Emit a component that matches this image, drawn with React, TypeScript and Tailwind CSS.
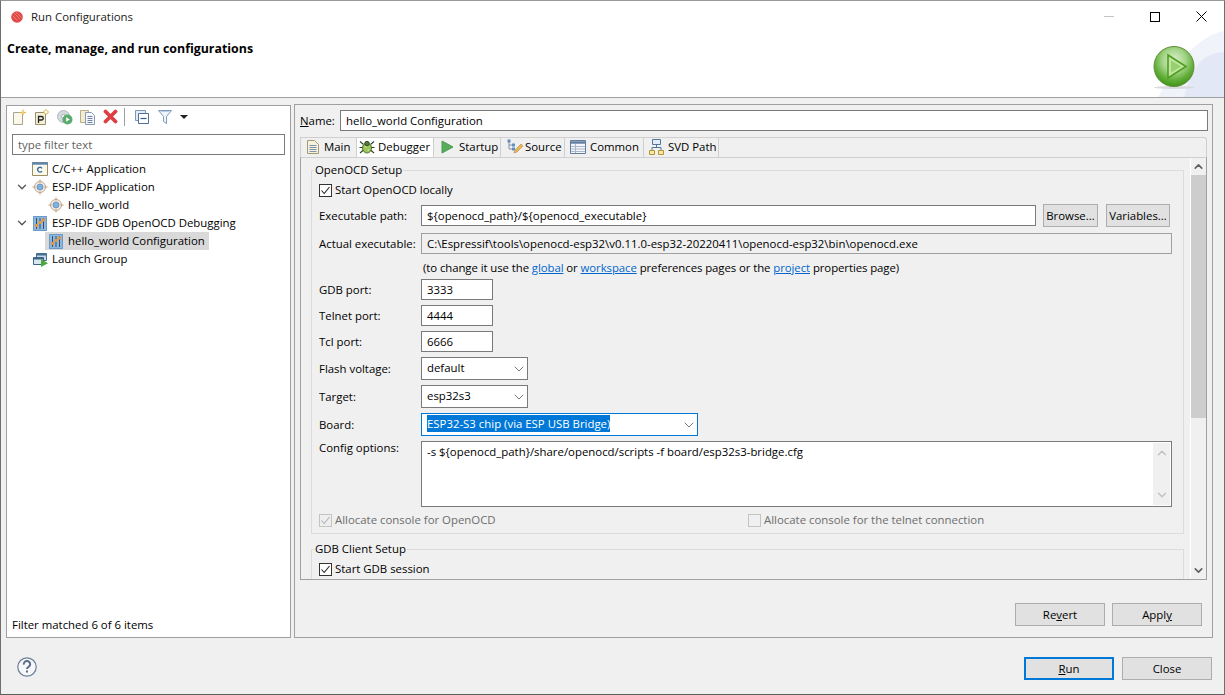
import React from 'react';
import { ChevronDown, ChevronUp } from 'lucide-react';

const AppIcon = () => (
  <svg width="12" height="12" viewBox="0 0 12 12">
    <circle cx="6" cy="6" r="5.8" fill="#df4a48" />
    <path d="M3 2l6 6M1.500 4.500l5 5M5 1l5.500 5.500" stroke="#f08a84" strokeWidth="0.8" />
  </svg>
);

const PlayBadge = () => (
  <svg width="42" height="44" viewBox="0 0 42 44">
    <defs>
      <radialGradient id="ball" cx="50%" cy="35%" r="65%">
        <stop offset="0%" stopColor="#dcefcf" />
        <stop offset="45%" stopColor="#a4d488" />
        <stop offset="75%" stopColor="#63ae3a" />
        <stop offset="100%" stopColor="#3f9416" />
      </radialGradient>
    </defs>
    <ellipse cx="21" cy="41.500" rx="20" ry="1.500" fill="#d9dadb" />
    <circle cx="21" cy="20.500" r="20" fill="url(#ball)" stroke="#5f8f3a" strokeWidth="1" />
    <path d="M15 9l18 11.500-18 11.500z" fill="#bfe5a0" stroke="#4f9e1e" strokeWidth="1.600" />
    <path d="M18 14.500l10 6-10 6z" fill="#98cf70" />
  </svg>
);

const NewConfig = () => (
  <svg width="16" height="16" viewBox="0 0 16 16">
    <path d="M2.500 3.500h9v12h-9z" fill="#fbf8ea" stroke="#a8a68c" />
    <path d="M12 .5v6M9 3.500h6" stroke="#e5b84a" strokeWidth="1.200" />
    <path d="M10.500 2l3 3M13.500 2l-3 3" stroke="#f0d890" strokeWidth="0.800" />
  </svg>
);

const NewProto = () => (
  <svg width="16" height="16" viewBox="0 0 16 16">
    <path d="M1.500 3.500h10v12h-10z" fill="#f4f0d8" stroke="#96906c" />
    <path d="M4.500 14V7.500h3a1.700 1.700 0 010 3.500h-3" fill="none" stroke="#222222" strokeWidth="1.300" />
    <path d="M12 .5l2.500 2.500L12 5.500 9.500 3z" fill="#ffffff" stroke="#d9a92c" />
  </svg>
);

const Duplicate = () => (
  <svg width="16" height="16" viewBox="0 0 16 16">
    <circle cx="6.500" cy="7.500" r="6" fill="#d5d8de" stroke="#b4b8c2" />
    <circle cx="6.500" cy="7.500" r="2" fill="#ffffff" stroke="#a8acb6" />
    <circle cx="10.500" cy="10.500" r="5" fill="#5bab6c" />
    <path d="M9.200 8.200l3.600 2.300-3.600 2.300z" fill="#ffffff" />
  </svg>
);

const Copy = () => (
  <svg width="16" height="16" viewBox="0 0 16 16">
    <path d="M.5 1.500h8v12h-8z" fill="#f4ecd2" stroke="#bcae84" />
    <path d="M5.500 3.500h6l3 3v9h-9z" fill="#f7f8fb" stroke="#8d9cb4" />
    <path d="M7.500 7.500h5M7.500 9.500h5M7.500 11.500h5M7.500 13.500h5" stroke="#6e84a8" />
  </svg>
);

const DeleteX = () => (
  <svg width="15" height="15" viewBox="0 0 15 15">
    <path d="M2.500 2.500l10 10M12.500 2.500l-10 10" stroke="#dd3f44" strokeWidth="3.800" strokeLinecap="round" />
  </svg>
);

const Collapse = () => (
  <svg width="14" height="14" viewBox="0 0 14 14">
    <path d="M.5.5h10v10H.5z" fill="#e4ebf4" stroke="#7d97b8" />
    <path d="M3.500 3.500h10v10h-10z" fill="#ffffff" stroke="#4f7199" />
    <path d="M5.500 8.500h6" stroke="#2f5b8e" strokeWidth="1.200" />
  </svg>
);

const Funnel = () => (
  <svg width="14" height="16" viewBox="0 0 14 16">
    <path d="M.5 1.500h13l-5 6v7l-3-2v-5z" fill="#eef4fa" stroke="#7f9cbc" />
    <path d="M2.500 2.500h9" stroke="#b8cde0" />
  </svg>
);

const CIcon = () => (
  <svg width="16" height="16" viewBox="0 0 16 16">
    <path d="M.5 1.500h15v13H.5z" fill="#fbf8ec" stroke="#9a8f5d" />
    <path d="M0 2.500h16" stroke="#5d87b0" strokeWidth="2.400" />
    <path d="M10 7.400A2.300 2.300 0 106 9.800a2.300 2.300 0 004 .4" fill="none" stroke="#3f6e9c" strokeWidth="1.300" />
  </svg>
);

const TargetIcon = () => (
  <svg width="16" height="16" viewBox="0 0 16 16">
    <circle cx="8" cy="8" r="5.500" fill="#f4ece2" stroke="#c2a88a" />
    <circle cx="8" cy="8" r="3" fill="#7fb2e0" stroke="#689ac6" />
    <path d="M8 .5v3M8 12.500v3M.5 8h3M12.500 8h3" stroke="#c09a72" />
  </svg>
);

const DebugCfg = () => (
  <svg width="14" height="15" viewBox="0 0 14 15">
    <path d="M0 0h14v15H0z" fill="#8ab8e2" />
    <path d="M.5.5h13v14H.5z" fill="none" stroke="#6c9ac6" />
    <path d="M3.500 2v11M7 2v11M10.500 2v11" stroke="#3e4e60" />
    <rect x="2" y="8" width="3" height="3" fill="#e6963c" />
    <rect x="5.500" y="5" width="3" height="3" fill="#e6963c" />
    <rect x="9" y="2.500" width="3" height="3" fill="#e6963c" />
  </svg>
);

const LaunchGroup = () => (
  <svg width="15" height="15" viewBox="0 0 15 15">
    <path d="M3.500 1.500h10v7h-10z" fill="#c8d8e6" stroke="#47708f" />
    <path d="M3.500 1.500h10v2h-10z" fill="#47708f" />
    <path d="M.5 5.500h10v7H.5z" fill="#dbe6f0" stroke="#3d6684" />
    <path d="M.5 5.500h10v2H.5z" fill="#3d6684" />
    <path d="M8 7l7 4.200-7 3.800z" fill="#4aa83e" />
  </svg>
);

const DocTab = () => (
  <svg width="14" height="16" viewBox="0 0 14 16">
    <path d="M1.500 1.500h7l4 4v9h-11z" fill="#f6f1dc" stroke="#a49a70" />
    <path d="M3.500 6.500h7M3.500 8.500h7M3.500 10.500h7M3.500 12.500h7" stroke="#7e92ae" />
  </svg>
);

const BugTab = () => (
  <svg width="16" height="16" viewBox="0 0 16 16">
    <path d="M1 2.500l3.500 3M15 2.500l-3.500 3M.5 8.500h4M15.500 8.500h-4M1 14l3.500-3M15 14l-3.500-3" stroke="#26402c" strokeWidth="1.100" />
    <ellipse cx="8" cy="9" rx="4.500" ry="5" fill="#9cc45a" stroke="#4d7432" />
    <circle cx="8" cy="4.500" r="2.200" fill="#5c7a3c" stroke="#2e4a24" />
    <path d="M6 8h1.500M8.500 11h1.500" stroke="#e4f0c4" />
  </svg>
);

const PlayTab = () => (
  <svg width="13" height="14" viewBox="0 0 13 14">
    <path d="M1 1l11 6-11 6z" fill="#58ad5c" stroke="#4a9a50" />
  </svg>
);

const SourceTab = () => (
  <svg width="17" height="16" viewBox="0 0 17 16">
    <path d="M3 2v8h4M3 6h4" fill="none" stroke="#7e92ae" />
    <rect x="1.500" y=".5" width="3" height="3" fill="#5f8fc0" />
    <rect x="6" y="4.500" width="3" height="3" fill="#5f8fc0" />
    <rect x="6" y="8.500" width="3" height="3" fill="#5f8fc0" />
    <path d="M8 14l1-3 6-6 2 2-6 6z" fill="#e8b65a" stroke="#c08a34" strokeWidth=".6" />
  </svg>
);

const CommonTab = () => (
  <svg width="16" height="14" viewBox="0 0 16 14">
    <path d="M.5.5h15v13H.5z" fill="#f4f6f9" stroke="#5f7d9e" />
    <path d="M1 2.500h14" stroke="#5f7d9e" strokeWidth="2.400" />
    <path d="M5.500 4v9M1 6.500h14M1 9h14M1 11.500h14" stroke="#a8b8ca" />
  </svg>
);

const SvdTab = () => (
  <svg width="15" height="16" viewBox="0 0 15 16">
    <path d="M3.500.5h8v5h-8z" fill="#e4ecf6" stroke="#50769c" />
    <path d="M7.500 5.500v3M3 11V8.500h9V11" fill="none" stroke="#50769c" />
    <path d="M.5 11.500h5v4h-5zM9.500 11.500h5v4h-5z" fill="#f8e8a8" stroke="#b89430" />
  </svg>
);

const Help = () => (
  <svg width="20" height="20" viewBox="0 0 20 20">
    <circle cx="10" cy="10" r="9.200" fill="#f6f7f9" stroke="#6c7f98" strokeWidth="1.200" />
    <path d="M6.800 7.600a3.200 3.200 0 116 1c-.6 1.200-2.800 1.600-2.800 3.400" fill="none" stroke="#5a6d88" strokeWidth="2" />
    <rect x="9" y="13.500" width="2" height="2" fill="#5a6d88" />
  </svg>
);

const Check = ({ muted = false }: { muted?: boolean }) => (
  <span className={`flex h-[13px] w-[13px] shrink-0 items-center justify-center border ${muted ? 'border-[#c4c4c4] bg-[#eeeeee]' : 'border-[#333333] bg-white'}`}>
    <svg width="11" height="11" viewBox="0 0 11 11">
      <path d="M1.500 5.500l2.700 3 5.300-6.500" fill="none" stroke={muted ? '#b0b0b0' : '#222222'} strokeWidth="1.100" />
    </svg>
  </span>
);

const Btn = ({ children, className = '', focused = false }: { children: React.ReactNode; className?: string; focused?: boolean }) => (
  <div className={`flex h-[23px] items-center justify-center bg-[#e1e1e1] text-black ${focused ? 'border-2 border-[#0078d7]' : 'border border-[#adadad]'} ${className}`}>{children}</div>
);

const Field = ({ children, className = '', disabled = false }: { children?: React.ReactNode; className?: string; disabled?: boolean }) => (
  <div className={`flex h-[21px] items-center border pl-[5px] ${disabled ? 'border-[#a0a0a0] bg-[#f0f0f0]' : 'border-[#7a7a7a] bg-white'} ${className}`}>{children}</div>
);

const Select = ({ text }: { text: string }) => (
  <div className="flex h-[23px] w-[107px] items-center justify-between border border-[#7a7a7a] bg-white pl-[5px]">
    <span className="-mt-[2px]">{text}</span>
    <ChevronDown size={16} strokeWidth={1.100} color="#444444" />
  </div>
);

const Row = ({ label, children, className = '' }: { label: string; children: React.ReactNode; className?: string }) => (
  <div className={`flex items-center ${className}`}>
    <span className="w-[102px] shrink-0">{label}</span>
    {children}
  </div>
);

const TreeRow = ({ label, icon, indent, open, active }: { label: string; icon: React.ReactNode; indent: string; open?: boolean; active?: boolean }) => (
  <div className={`flex h-[18px] items-center ${indent}`}>
    <span className="flex w-[16px] shrink-0 justify-center">{open && <ChevronDown size={14} strokeWidth={2.200} color="#555555" />}</span>
    <span className={`-ml-px flex h-[18px] items-center gap-[4px] pl-[3px] pr-[4px] ${active ? 'bg-[#d9d9d9]' : ''}`}>
      <span className="flex w-[16px] justify-center">{icon}</span>
      <span>{label}</span>
    </span>
  </div>
);

const Tab = ({ label, icon, active, className }: { label: string; icon: React.ReactNode; active?: boolean; className: string }) => (
  <div className={`flex h-[19px] shrink-0 items-center border-r border-[#cfcfcf] pb-[2px] ${active ? 'bg-white' : 'bg-[#f0f0f0]'} ${className}`}>
    {icon}
    <span>{label}</span>
  </div>
);

export default function App() {
  return (
    <div className="flex h-[695px] w-[1225px] flex-col overflow-hidden border border-t-[#9a9a9a] border-x-[#6e6e6e] border-b-[#5e5e5e] bg-[#f0f0f0] text-[11.4px] text-black [font-family:'Open_Sans',sans-serif]">
      {/* banner */}
      <div className="relative h-[97px] shrink-0 border-b border-[#a0a0a0] bg-white">
        <div className="flex h-[31px] items-center pl-[10px]">
          <AppIcon />
          <span className="ml-[8px] text-[#222222]">Run Configurations</span>
          <div className="ml-auto flex items-center pr-[17px]">
            <span className="mr-[36px] h-px w-[10px] bg-[#c4c4c4]" />
            <span className="mr-[36px] h-[10px] w-[10px] border border-black" />
            <svg width="11" height="11" viewBox="0 0 11 11">
              <path d="M.5.5l10 10M10.500.5l-10 10" stroke="#000000" strokeWidth="1" />
            </svg>
          </div>
        </div>
        <div className="mt-[8px] pl-[6px] text-[12.4px] font-bold">Create, manage, and run configurations</div>
        <svg className="absolute bottom-0 right-0" width="70" height="66" viewBox="0 0 70 66">
          <path d="M70 0C42 6 22 34 4 66h66z" fill="#f1f3fb" />
          <path d="M70 21C52 22 40 30 30 66h40z" fill="#e3e8f6" />
        </svg>
        <div className="absolute bottom-[7px] right-[29px]">
          <PlayBadge />
        </div>
      </div>

      {/* body */}
      <div className="flex min-h-0 flex-1 gap-[3px] pl-[5px] pr-[11px] pt-[7px]">
        <div className="flex h-[533px] w-[285px] shrink-0 flex-col border border-[#a0a0a0] bg-white">
          <div className="flex h-[27px] items-center pb-[6px] pl-[4px]">
            <span className="flex w-[23px]"><NewConfig /></span>
            <span className="flex w-[23px]"><NewProto /></span>
            <span className="flex w-[23px]"><Duplicate /></span>
            <span className="flex w-[23px]"><Copy /></span>
            <span className="flex w-[21px]"><DeleteX /></span>
            <span className="mr-[10px] h-[18px] w-px bg-[#a0a0a0]" />
            <span className="flex w-[23px]"><Collapse /></span>
            <span className="flex w-[22px]"><Funnel /></span>
            <span className="h-0 w-0 border-x-[4px] border-t-[4px] border-x-transparent border-t-[#222222]" />
          </div>
          <div className="mx-[5px] mt-[1px] flex h-[21px] items-center border border-[#7a7a7a] pl-[5px] text-[#5f5f5f]">type filter text</div>
          <div className="mt-[5px] flex-1">
            <TreeRow indent="pl-[7px]" label="C/C++ Application" icon={<CIcon />} />
            <TreeRow indent="pl-[7px]" open label="ESP-IDF Application" icon={<TargetIcon />} />
            <TreeRow indent="pl-[23px]" label="hello_world" icon={<TargetIcon />} />
            <TreeRow indent="pl-[7px]" open label="ESP-IDF GDB OpenOCD Debugging" icon={<DebugCfg />} />
            <TreeRow indent="pl-[23px]" active label="hello_world Configuration" icon={<DebugCfg />} />
            <TreeRow indent="pl-[7px]" label="Launch Group" icon={<LaunchGroup />} />
          </div>
          <div className="pb-[4px] pl-[5px]">Filter matched 6 of 6 items</div>
        </div>

        <div className="-mt-[1px] flex h-[534px] flex-1 flex-col border border-[#a0a0a0] pl-[5px] pr-[4px]">
          <div className="mt-[5px] flex h-[21px] items-center">
            <span className="w-[40px]"><span className="underline">N</span>ame:</span>
            <Field className="flex-1">hello_world Configuration</Field>
          </div>
          <div className="mr-px mt-[6px] flex h-[20px] rounded-tr-[3px] border-r border-t border-[#cfcfcf]">
            <Tab className="w-[57px] gap-[4px] border-l pl-[5px]" label="Main" icon={<DocTab />} />
            <Tab active className="w-[77px] gap-[3px] pl-[2px]" label="Debugger" icon={<BugTab />} />
            <Tab className="w-[67px] gap-[5px] pl-[7px]" label="Startup" icon={<PlayTab />} />
            <Tab className="w-[64px] gap-[2px] pl-[5px]" label="Source" icon={<SourceTab />} />
            <Tab className="w-[79px] gap-[4px] pl-[5px]" label="Common" icon={<CommonTab />} />
            <Tab className="w-[75px] gap-[4px] pl-[5px]" label="SVD Path" icon={<SvdTab />} />
          </div>
          <div className="mr-px flex h-[423px] overflow-hidden border border-[#a0a0a0] border-t-[#cfcfcf]">
            <div className="min-w-0 flex-1 overflow-hidden pl-[10px] pr-[6px] pt-[5px]">
              <fieldset className="h-[371px] border border-[#dcdcdc] pl-[7px] pr-[11px]">
                <legend className="-ml-[5px] px-[1px] leading-[14px]">OpenOCD Setup</legend>
                <div className="mt-[5px] flex h-[16px] items-center gap-[3px]">
                  <Check />
                  <span>Start OpenOCD locally</span>
                </div>
                <Row label="Executable path:" className="mt-[6px]">
                  <Field className="w-[615px]">{'${openocd_path}/${openocd_executable}'}</Field>
                  <Btn className="ml-[7px] w-[55px]">Browse...</Btn>
                  <Btn className="ml-[8px] w-[64px]">Variables...</Btn>
                </Row>
                <Row label="Actual executable:" className="mt-[6px]">
                  <Field disabled className="flex-1">{'C:\\Espressif\\tools\\openocd-esp32\\v0.11.0-esp32-20220411\\openocd-esp32\\bin\\openocd.exe'}</Field>
                </Row>
                <div className="mt-[5px] h-[18px] pl-[104px] leading-[18px] tracking-[-0.08px]">
                  (to change it use the <span className="text-[#0066cc] underline">global</span> or <span className="text-[#0066cc] underline">workspace</span> preferences pages or the <span className="text-[#0066cc] underline">project</span> properties page)
                </div>
                <Row label="GDB port:" className="mt-[2px]"><Field className="w-[72px]">3333</Field></Row>
                <Row label="Telnet port:" className="mt-[5px]"><Field className="w-[72px]">4444</Field></Row>
                <Row label="Tcl port:" className="mt-[5px]"><Field className="w-[72px]">6666</Field></Row>
                <Row label="Flash voltage:" className="mt-[5px]"><Select text="default" /></Row>
                <Row label="Target:" className="mt-[5px]"><Select text="esp32s3" /></Row>
                <Row label="Board:" className="mt-[5px]">
                  <div className="flex h-[23px] w-[277px] items-center justify-between border border-[#0078d7] bg-white pl-[5px]">
                    <span className="-mt-[2px] bg-[#0078d7] text-white">ESP32-S3 chip (via ESP USB Bridge)</span>
                    <ChevronDown size={16} strokeWidth={1.100} color="#444444" />
                  </div>
                </Row>
                <div className="mt-[5px] flex items-start">
                  <span className="-mt-[2px] w-[102px] shrink-0">Config options:</span>
                  <div className="flex h-[66px] flex-1 justify-between border border-[#7a7a7a] bg-white pl-[5px] pt-[1px]">
                    <span>{'-s ${openocd_path}/share/openocd/scripts -f board/esp32s3-bridge.cfg'}</span>
                    <div className="mb-px mr-px flex w-[17px] flex-col items-center justify-between bg-[#f0f0f0] py-[3px]">
                      <ChevronUp size={14} strokeWidth={2.400} color="#c0c0c0" />
                      <ChevronDown size={14} strokeWidth={2.400} color="#c0c0c0" />
                    </div>
                  </div>
                </div>
                <div className="mt-[5px] flex h-[16px] items-center text-[#6d6d6d]">
                  <span className="flex w-[429px] items-center gap-[3px]"><Check muted />Allocate console for OpenOCD</span>
                  <span className="flex items-center gap-[3px]">
                    <span className="h-[13px] w-[13px] border border-[#c4c4c4]" />
                    Allocate console for the telnet connection
                  </span>
                </div>
              </fieldset>
              <fieldset className="mt-[8px] h-[60px] border border-[#dcdcdc] pl-[7px]">
                <legend className="-ml-[5px] px-[1px] leading-[14px]">GDB Client Setup</legend>
                <div className="mt-[5px] flex h-[16px] items-center gap-[3px]">
                  <Check />
                  <span>Start GDB session</span>
                </div>
              </fieldset>
            </div>
            <div className="flex w-[16px] shrink-0 flex-col items-center border-l border-white bg-[#f0f0f0]">
              <div className="flex h-[17px] items-center"><ChevronUp size={13} strokeWidth={3} color="#606060" /></div>
              <div className="h-[243px] w-full bg-[#cdcdcd]" />
              <div className="mt-auto flex h-[17px] items-center"><ChevronDown size={13} strokeWidth={3} color="#606060" /></div>
            </div>
          </div>
          <div className="mt-[23px] flex justify-end gap-[7px] pr-[6px]">
            <Btn className="w-[90px]">Re<span className="underline">v</span>ert</Btn>
            <Btn className="w-[90px]">Appl<span className="underline">y</span></Btn>
          </div>
        </div>
      </div>

      {/* footer */}
      <div className="flex h-[57px] shrink-0 items-center pl-[16px] pr-[11px] pt-[6px]">
        <span className="mb-[4px] flex"><Help /></span>
        <div className="ml-auto flex gap-[8px] pr-px">
          <Btn focused className="w-[90px]"><span className="underline">R</span>un</Btn>
          <Btn className="w-[90px]">Close</Btn>
        </div>
      </div>
    </div>
  );
}
